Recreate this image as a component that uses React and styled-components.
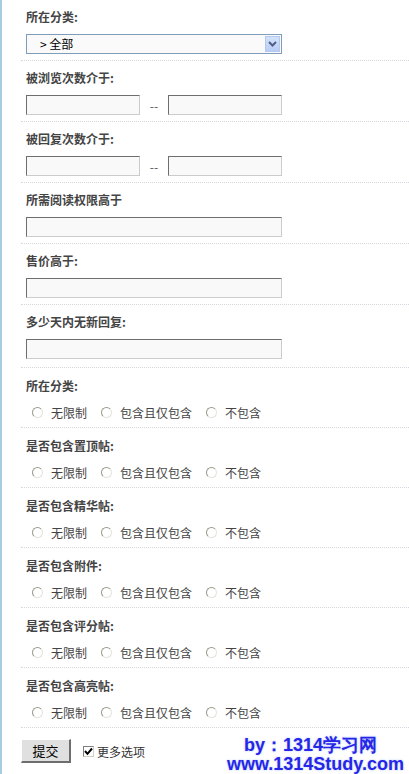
import React from "react";
import styled, { createGlobalStyle } from "styled-components";

const GlobalStyle = createGlobalStyle`
  html, body {
    margin: 0;
    padding: 0;
    background: #ffffff;
  }
  body {
    font-family: "Noto Sans CJK SC", "Liberation Sans", sans-serif;
    font-size: 12px;
    color: #333;
  }
`;

const choices = ["无限制", "包含且仅包含", "不包含"];

const radioGroups = [
  "所在分类:",
  "是否包含置顶帖:",
  "是否包含精华帖:",
  "是否包含附件:",
  "是否包含评分帖:",
  "是否包含高亮帖:",
];

const App = () => {
  return (
    <Page>
      <GlobalStyle />
      <Section>
        <Label>所在分类:</Label>
        <SelectBox>
          <SelectText>&gt; 全部</SelectText>
          <SelectArrow>
            <svg width="9" height="6" viewBox="0 0 9 6">
              <path d="M1 1 L4.5 4.5 L8 1" fill="none" stroke="#4d6185" strokeWidth="2" />
            </svg>
          </SelectArrow>
        </SelectBox>
      </Section>
      <Section>
        <Label>被浏览次数介于:</Label>
        <Range>
          <TextInput $small />
          <Dash>--</Dash>
          <TextInput $small />
        </Range>
      </Section>
      <Section>
        <Label>被回复次数介于:</Label>
        <Range>
          <TextInput $small />
          <Dash>--</Dash>
          <TextInput $small />
        </Range>
      </Section>
      <Section>
        <Label>所需阅读权限高于</Label>
        <TextInput />
      </Section>
      <Section>
        <Label>售价高于:</Label>
        <TextInput />
      </Section>
      <Section $last>
        <Label>多少天内无新回复:</Label>
        <TextInput />
      </Section>
      {radioGroups.map((title, i) => (
        <Section key={i} $radio>
          <Label $radio>{title}</Label>
          <RadioRow>
            {choices.map((c) => (
              <RadioItem key={c}>
                <Radio />
                <span>{c}</span>
              </RadioItem>
            ))}
          </RadioRow>
        </Section>
      ))}
      <Footer>
        <Button>提交</Button>
        <CheckItem>
          <CheckBox>
            <svg width="9" height="9" viewBox="0 0 9 9">
              <path d="M1 4 L3.5 6.8 L8 1.5" fill="none" stroke="#000" strokeWidth="2" />
            </svg>
          </CheckBox>
          <span>更多选项</span>
        </CheckItem>
        <Watermark>
          <div>by：1314学习网</div>
          <div>www.1314Study.com</div>
        </Watermark>
      </Footer>
    </Page>
  );
};

const Page = styled.div`
  border-left: 2px solid #a8cbde;
  min-height: 774px;
  box-sizing: border-box;
  overflow: hidden;
`;

const Section = styled.div`
  margin-left: 19px;
  padding: ${(p) =>
    p.$radio ? "10px 0 5px 5px" : p.$last ? "9px 0 8px 5px" : "9px 0 6px 5px"};
  border-bottom: 1px dotted #d4d8dc;
`;

const Label = styled.div`
  height: 16px;
  line-height: 16px;
  font-weight: bold;
  color: #444;
  margin-bottom: ${(p) => (p.$radio ? "8px" : "9px")};
`;

const SelectBox = styled.div`
  display: flex;
  align-items: center;
  width: 256px;
  height: 20px;
  box-sizing: border-box;
  border: 1px solid #7f9db9;
  background: #fafafa;
  padding: 1px;
`;

const SelectText = styled.div`
  flex: 1;
  padding-left: 12px;
  line-height: 16px;
  color: #000;
`;

const SelectArrow = styled.div`
  width: 15px;
  height: 16px;
  display: flex;
  align-items: center;
  justify-content: center;
  background: linear-gradient(#d4e2fb, #b9cdf4);
  border: 1px solid #b4c8ef;
  box-sizing: border-box;
`;

const Range = styled.div`
  display: flex;
  align-items: center;
`;

const Dash = styled.span`
  width: 28px;
  text-align: center;
  color: #555;
`;

const TextInput = styled.div`
  width: ${(p) => (p.$small ? "114px" : "256px")};
  height: 20px;
  box-sizing: border-box;
  background: #f9f9f9;
  border-top: 1px solid #6e6e6e;
  border-left: 1px solid #6e6e6e;
  border-right: 1px solid #cccccc;
  border-bottom: 1px solid #cccccc;
`;

const RadioRow = styled.div`
  display: flex;
  align-items: center;
  height: 20px;
  padding-left: 6px;
  gap: 14px;
`;

const RadioItem = styled.label`
  display: flex;
  align-items: center;
  gap: 8px;
  color: #444;
`;

const Radio = styled.span`
  width: 9px;
  height: 9px;
  border-radius: 50%;
  border: 1px solid #9a9a8a;
  border-right-color: #e4e4dc;
  border-bottom-color: #e4e4dc;
  background: #ffffff;
`;

const Footer = styled.div`
  position: relative;
  display: flex;
  align-items: center;
  height: 46px;
  padding-left: 19px;
  gap: 12px;
`;

const Button = styled.div`
  width: 50px;
  height: 24px;
  box-sizing: border-box;
  display: flex;
  align-items: center;
  justify-content: center;
  background: #e0e0e0;
  border-top: 1px solid #ffffff;
  border-left: 1px solid #ffffff;
  border-right: 2px solid #6e6e6e;
  border-bottom: 2px solid #6e6e6e;
  color: #000;
  font-size: 13px;
`;

const CheckItem = styled.label`
  display: flex;
  align-items: center;
  gap: 3px;
  color: #333;
`;

const CheckBox = styled.span`
  width: 11px;
  height: 11px;
  box-sizing: border-box;
  border: 1px solid #808080;
  border-right-color: #d4d0c8;
  border-bottom-color: #d4d0c8;
  background: #fff;
  display: flex;
  align-items: center;
  justify-content: center;
`;

const Watermark = styled.div`
  position: absolute;
  right: 5px;
  bottom: 0;
  font-family: "Liberation Sans", Arial, sans-serif;
  font-weight: bold;
  font-size: 18px;
  line-height: 19px;
  color: #2626e8;
  text-align: right;
  text-shadow: 0 0 2px #c9d6ff, 0 0 3px #dfe6ff;
  & > div:first-child {
    padding-right: 27px;
  }
`;

export default App;
